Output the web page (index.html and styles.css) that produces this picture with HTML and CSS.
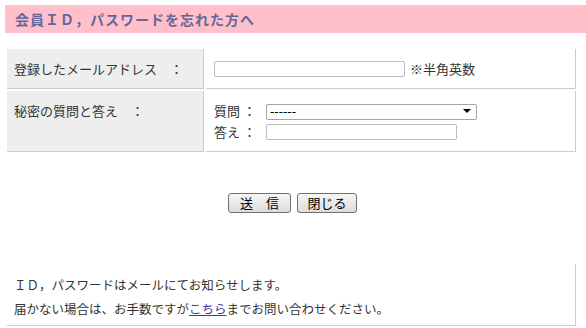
FILE: index.html
```html
<!DOCTYPE html>
<html lang="ja">
<head>
  <meta charset="UTF-8" />
  <title>会員ID，パスワードを忘れた方へ</title>
  <link rel="stylesheet" href="styles.css">
</head>
<body>
  <h1 class="title">会員ＩＤ，パスワードを忘れた方へ</h1>

  <form class="remind-form">
    <table class="form-table">
      <tr>
        <th>登録したメールアドレス　：</th>
        <td>
          <div class="line">
            <input type="text" class="mail-input">
            <span class="note">※半角英数</span>
          </div>
        </td>
      </tr>
      <tr>
        <th>秘密の質問と答え　：</th>
        <td>
          <div class="line">
            <span class="sub-label">質問 ：</span>
            <span class="select-wrap">
              <select class="question">
                <option>------</option>
              </select>
            </span>
          </div>
          <div class="line">
            <span class="sub-label">答え ：</span>
            <input type="text" class="answer-input">
          </div>
        </td>
      </tr>
    </table>

    <div class="buttons">
      <button type="submit" class="btn btn-send">送　信</button>
      <button type="button" class="btn btn-close">閉じる</button>
    </div>
  </form>

  <div class="info">
    <p>ＩＤ，パスワードはメールにてお知らせします。</p>
    <p>届かない場合は、お手数ですが<a href="#">こちら</a>までお問い合わせください。</p>
  </div>
</body>
</html>
```

FILE: styles.css
```css
* {
  box-sizing: border-box;
  margin: 0;
  padding: 0;
}

body {
  padding: 5px 0 0 5px;
  font-family: "Noto Sans CJK JP", "DejaVu Sans", sans-serif;
  font-size: 13px;
  color: #333;
  background: #fff;
}

.title {
  height: 28px;
  line-height: 28px;
  padding-left: 10px;
  background-color: #ffc0cb;
  color: #666699;
  font-size: 14px;
  font-weight: bold;
  letter-spacing: 1px;
}

.form-table {
  margin-top: 14px;
  width: 573px;
  border-spacing: 2px;
}

.form-table th,
.form-table td {
  vertical-align: top;
  text-align: left;
  font-weight: normal;
  padding: 12px 8px 11px;
  border-right: 1px solid #ccc;
  border-bottom: 1px solid #ccc;
  line-height: 16px;
}

.form-table th {
  width: 197px;
  padding-left: 7px;
  background-color: #eee;
}

.line {
  display: flex;
  align-items: center;
  height: 16px;
}

.line + .line {
  margin-top: 5px;
}

input[type="text"] {
  height: 16px;
  border: 1px solid #bdbdbd;
  border-radius: 2px;
  font-size: 12px;
  padding: 0 3px;
}

.mail-input {
  width: 191px;
}

.note {
  margin-left: 5px;
}

.sub-label {
  width: 52px;
}

.select-wrap {
  position: relative;
  display: inline-block;
}

.question {
  appearance: none;
  width: 211px;
  height: 16px;
  border: 1px solid #a5a5a5;
  border-radius: 2px;
  background: #fff;
  font-family: "DejaVu Sans", sans-serif;
  font-size: 12px;
  line-height: 14px;
  padding: 0 3px;
  color: #000;
}

.select-wrap::after {
  content: "";
  position: absolute;
  right: 6px;
  top: 6px;
  border-left: 4px solid transparent;
  border-right: 4px solid transparent;
  border-top: 4px solid #000;
}

.answer-input {
  width: 191px;
}

.buttons {
  margin-top: 39px;
  display: flex;
  justify-content: center;
  gap: 6px;
  padding-right: 6px;
}

.btn {
  height: 20px;
  border: 1px solid #707070;
  border-radius: 3px;
  background: linear-gradient(#f6f6f6, #dcdcdc);
  font-family: inherit;
  font-size: 13px;
  line-height: 16px;
  color: #000;
  cursor: pointer;
}

.btn-send {
  width: 63px;
}

.btn-close {
  width: 60px;
}

.info {
  margin: 51px 0 0 2px;
  width: 569px;
  padding: 9px 8px 4px 7px;
  border-right: 1px solid #ccc;
  border-bottom: 1px solid #ccc;
  line-height: 24px;
  font-size: 12.5px;
}

.info a {
  color: #4433aa;
  text-decoration: underline;
}
```
